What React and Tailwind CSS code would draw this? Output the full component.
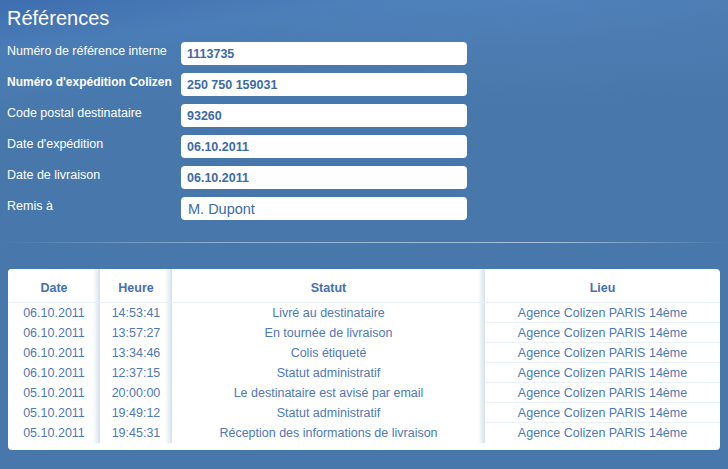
import React from "react";

const fields = [
  { label: "Numéro de référence interne", value: "1113735" },
  { label: "Numéro d'expédition Colizen", value: "250 750 159031", boldLabel: true },
  { label: "Code postal destinataire", value: "93260" },
  { label: "Date d'expédition", value: "06.10.2011" },
  { label: "Date de livraison", value: "06.10.2011" },
  { label: "Remis à", value: "M. Dupont", big: true },
];

const rows = [
  ["06.10.2011", "14:53:41", "Livré au destinataire", "Agence Colizen PARIS 14ème"],
  ["06.10.2011", "13:57:27", "En tournée de livraison", "Agence Colizen PARIS 14ème"],
  ["06.10.2011", "13:34:46", "Colis étiqueté", "Agence Colizen PARIS 14ème"],
  ["06.10.2011", "12:37:15", "Statut administratif", "Agence Colizen PARIS 14ème"],
  ["05.10.2011", "20:00:00", "Le destinataire est avisé par email", "Agence Colizen PARIS 14ème"],
  ["05.10.2011", "19:49:12", "Statut administratif", "Agence Colizen PARIS 14ème"],
  ["05.10.2011", "19:45:31", "Réception des informations de livraison", "Agence Colizen PARIS 14ème"],
];

const sep = "bg-[linear-gradient(to_right,#ffffff_calc(100%-7px),#d6e1ee)]";

export default function App() {
  return (
    <div
      className="relative w-full h-[469px] overflow-hidden bg-[#4878ab] text-white"
      style={{ fontFamily: '"Liberation Sans", Arial, sans-serif' }}
    >
      <div className="absolute inset-0 bg-[linear-gradient(172deg,#3e6eb0_0%,#4a7cb6_9%,#4878ab_22%)] pointer-events-none" />
      <div className="absolute inset-x-0 top-0 h-[120px] bg-[radial-gradient(ellipse_at_75%_0%,rgba(90,140,200,0.35),rgba(72,120,171,0)_60%)] pointer-events-none" />
      <div className="relative">
        <div className="pt-[6px] pl-[7px] h-[30px] text-[20px] leading-[24px]">Références</div>
        <div className="mt-[12px] pl-[7px] flex flex-col gap-[8px]">
          {fields.map((f) => (
            <div key={f.label} className="flex h-[23px]">
              <div
                className={`w-[174px] pt-[2px] leading-[14px] whitespace-nowrap ${f.boldLabel ? "font-bold text-[12px]" : "text-[12.5px]"}`}
              >
                {f.label}
              </div>
              <div
                className={`w-[286px] h-[23px] rounded-[4px] bg-white flex items-center text-[#3d6aa8] ${
                  f.big ? "pl-[7px] text-[14.5px] leading-[16px]" : "pl-[6px] pt-px font-bold text-[12.5px] leading-[14px]"
                }`}
              >
                {f.value}
              </div>
            </div>
          ))}
        </div>
        <div className="mt-[22px] h-px bg-[linear-gradient(to_right,rgba(255,255,255,0),rgba(190,210,235,0.6)_30%,rgba(200,218,240,0.75)_75%,rgba(255,255,255,0))]" />
        <div className="mt-[26px] mx-[8px] bg-white rounded-[4px] overflow-hidden pb-[7px] text-[12.5px]">
          <div className="grid grid-cols-[92px_72px_313px_1fr] h-[34px] border-b border-[#eaf0f7] font-bold text-[#4570b0]">
            {["Date", "Heure", "Statut", "Lieu"].map((h, i) => (
              <div key={h} className={`text-center pt-[12px] leading-[14px] ${i < 3 ? sep : ""}`}>
                {h}
              </div>
            ))}
          </div>
          {rows.map((r, ri) => (
            <div
              key={ri}
              className={`grid grid-cols-[92px_72px_313px_1fr] h-[20px] ${ri < rows.length - 1 ? "border-b border-[#eaf0f7]" : ""} text-[#4e78b8]`}
            >
              {r.map((c, i) => (
                <div key={i} className={`text-center pt-px leading-[19px] whitespace-nowrap ${i < 3 ? sep : ""}`}>
                  {c}
                </div>
              ))}
            </div>
          ))}
        </div>
      </div>
    </div>
  );
}
